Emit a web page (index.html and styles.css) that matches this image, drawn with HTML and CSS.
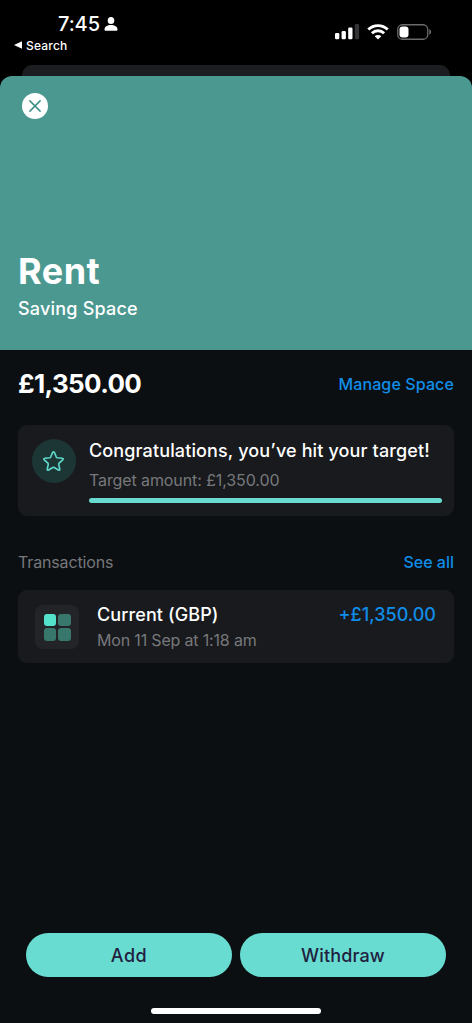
FILE: index.html
```html
<!DOCTYPE html>
<html lang="en">
<head>
<meta charset="utf-8">
<title>Rent – Saving Space</title>
<link rel="stylesheet" href="styles.css">
</head>
<body>
<div class="screen">
  <header class="status">
    <div class="status-left">
      <div class="clock"><span class="time">7:45</span>
        <svg class="person" width="14" height="14" viewBox="0 0 14 14" fill="#fff"><ellipse cx="7" cy="3.500" rx="3.300" ry="3.500"/><path d="M.5 12.400C.5 9.800 3.300 8 7 8s6.500 1.800 6.500 4.400c0 .9-.5 1.300-1.300 1.300H1.800C1 13.700.5 13.300.5 12.400z"/></svg>
      </div>
      <div class="back"><svg width="8" height="8" viewBox="0 0 8 8" fill="#fff"><path d="M0 4 8 .3v7.400z"/></svg><span class="back-label">Search</span></div>
    </div>
    <div class="status-right">
      <svg class="signal" width="25" height="16" viewBox="0 0 25 16" fill="#fff"><rect x="0" y="9" width="4.300" height="6.300" rx="1.200"/><rect x="6.600" y="7" width="4.300" height="8.300" rx="1.200"/><rect x="13.200" y="3.500" width="4.300" height="11.800" rx="1.200"/><rect x="19.800" y="0" width="4.300" height="15.300" rx="1.200" fill="#343436"/></svg>
      <svg class="wifi" width="22" height="16" viewBox="0 0 22 16" fill="none" stroke="#fff" stroke-width="2.900"><path d="M1.300 5.500a14 14 0 0 1 19.400 0"/><path d="M4.900 9.300a8.700 8.700 0 0 1 12.200 0"/><path d="M11 15.600 7.700 12.300a4.700 4.700 0 0 1 6.600 0z" fill="#fff" stroke="none"/></svg>
      <svg class="battery" width="35" height="16" viewBox="0 0 35 16"><rect x=".75" y=".75" width="30" height="14.500" rx="4.600" fill="none" stroke="#6c6c6e" stroke-width="1.300"/><rect x="2.500" y="2.500" width="9" height="11" rx="3" fill="#fff"/><path d="M32.300 5.300c1.200.4 1.800 1.500 1.800 2.700s-.6 2.300-1.800 2.700z" fill="#6c6c6e"/></svg>
    </div>
  </header>
  <div class="underlay"></div>
  <main class="sheet">
    <section class="hero">
      <button class="close" aria-label="Close"><svg width="12" height="12" viewBox="0 0 12 12" fill="none" stroke="#3e8f88" stroke-width="1.500" stroke-linecap="round"><path d="M.9.9l10.200 10.200M11.100.9.9 11.100"/></svg></button>
      <div>
        <h1 class="title">Rent</h1>
        <p class="subtitle">Saving Space</p>
      </div>
    </section>
    <section class="balance-row">
      <span class="balance">£1,350.00</span>
      <a class="link manage">Manage Space</a>
    </section>
    <section class="card goal">
      <div class="goal-icon"><svg width="23" height="23" viewBox="0 0 22 22" fill="none" stroke="#5fd8cb" stroke-width="1.600" stroke-linejoin="round"><path d="M10.200 2.300Q11 1 11.800 2.300L13.700 6.700Q14 7.300 14.600 7.400L19.300 7.900Q20.900 8.200 19.800 9.400L16.400 12.500Q15.900 13 16 13.700L17 18.300Q17.100 19.800 15.700 19.200L11.700 16.800Q11 16.500 10.300 16.800L6.300 19.200Q4.900 19.800 5 18.300L6 13.700Q6.100 13 5.600 12.500L2.200 9.400Q1.100 8.200 2.700 7.900L7.400 7.400Q8 7.300 8.300 6.700Z"/></svg></div>
      <div class="goal-body">
        <div class="primary congrats">Congratulations, you’ve hit your target!</div>
        <div class="secondary target">Target amount: £1,350.00</div>
        <div class="progress"></div>
      </div>
    </section>
    <section class="section-head">
      <span class="secondary heading">Transactions</span>
      <a class="link see-all">See all</a>
    </section>
    <section class="card transaction">
      <div class="tile"><i class="cell lit"></i><i class="cell"></i><i class="cell"></i><i class="cell"></i></div>
      <div class="details">
        <div class="primary account">Current (GBP)</div>
        <div class="secondary date">Mon 11 Sep at 1:18 am</div>
      </div>
      <span class="amount">+£1,350.00</span>
    </section>
    <footer class="actions">
      <button class="action"><span class="add">Add</span></button>
      <button class="action"><span class="withdraw">Withdraw</span></button>
    </footer>
    <div class="home-bar"></div>
  </main>
</div>
</body>
</html>
```
FILE: styles.css
```css
* { box-sizing: border-box; }
body { margin: 0; background: #000; font-family: Inter, "Liberation Sans", sans-serif; color: #fff; }
svg { display: block; flex: none; }
button { border: 0; padding: 0; font: inherit; }
h1, p { margin: 0; }
span, a { white-space: nowrap; }
.screen { width: 472px; height: 1023px; display: flex; flex-direction: column; overflow: hidden; }
.status { height: 65px; display: flex; justify-content: space-between; flex: none; }
.status-left { padding: 12px 0 0 14px; }
.clock { display: flex; align-items: center; gap: 4px; height: 24px; padding-left: 44px; }
.time { font-size: 20px; font-weight: 500; line-height: 24px; letter-spacing: -.1px; }
.back { display: flex; align-items: center; gap: 4px; height: 18px; }
.back-label { font-size: 12px; font-weight: 500; letter-spacing: .2px; }
.status-right { display: flex; padding: 24px 40px 0 0; }
.wifi { margin: 0 8px 0 7px; }
.underlay { height: 11px; margin: 0 22px; border-radius: 10px 10px 0 0; background: #1c1d20; flex: none; }
.sheet { flex: 1; display: flex; flex-direction: column; background: linear-gradient(#000 0 24px, #0b0f12 24px); }
.hero { height: 274px; padding: 17px 18px 29px 22px; border-radius: 12px 12px 0 0; background: #4b9891; display: flex; flex-direction: column; justify-content: space-between; align-items: flex-start; }
.close { width: 26px; height: 26px; border-radius: 50%; background: #fff; display: grid; place-items: center; }
.title { margin-left: -4px; font-size: 36px; font-weight: 700; line-height: 44px; letter-spacing: .5px; }
.subtitle { margin-left: -4px; margin-top: 4px; font-size: 18px; font-weight: 500; line-height: 24px; letter-spacing: .2px; }
.balance-row { height: 75px; padding: 0 18px 8px; display: flex; align-items: center; justify-content: space-between; }
.balance { font-size: 26px; font-weight: 700; letter-spacing: -.65px; }
.link { color: #108de8; font-size: 16px; font-weight: 500; }
.manage { letter-spacing: .12px; }
.card { margin: 0 18px; border-radius: 9px; background: #191a1d; display: flex; }
.goal { height: 91px; padding: 14px 12.500px 0 13.500px; gap: 13.500px; }
.goal-icon { width: 44px; height: 44px; border-radius: 50%; background: #1b3634; display: grid; place-items: center; flex: none; }
.goal-body { flex: 1; min-width: 0; }
.primary { font-size: 18px; font-weight: 500; line-height: 24px; white-space: nowrap; }
.congrats { letter-spacing: .13px; }
.secondary { font-size: 16px; font-weight: 400; line-height: 22px; color: #77787b; white-space: nowrap; }
.target { margin-top: 6px; letter-spacing: -.1px; }
.heading { letter-spacing: -.15px; }
.progress { height: 5px; margin-top: 7px; border-radius: 3px; background: #68dacf; }
.section-head { height: 74px; padding: 17px 18px 0; display: flex; align-items: center; justify-content: space-between; }
.transaction { height: 73px; padding: 15px 18px 0 17px; }
.tile { width: 44px; height: 44px; border-radius: 8px; background: #232427; display: grid; grid-template-columns: 12.500px 12.500px; grid-auto-rows: 12.500px; gap: 2px; place-content: center; }
.cell { border-radius: 3px; background: #38776c; }
.lit { background: #52e3ca; }
.details { margin: -2px auto 0 18px; }
.account { letter-spacing: .1px; }
.date { margin-top: 2px; letter-spacing: -.17px; }
.amount { margin-top: -2px; color: #108de8; font-size: 18px; font-weight: 500; line-height: 24px; }
.actions { margin-top: auto; padding: 0 26px; display: grid; grid-template-columns: 1fr 1fr; gap: 8px; }
.action { height: 44px; border-radius: 22px; background: #69dcd1; color: #20203f; font-size: 18px; font-weight: 500; }
.add { letter-spacing: .5px; }
.withdraw { letter-spacing: .15px; }
.home-bar { width: 170px; height: 6px; margin: 31px auto 9px; border-radius: 3px; background: #fff; }
```
